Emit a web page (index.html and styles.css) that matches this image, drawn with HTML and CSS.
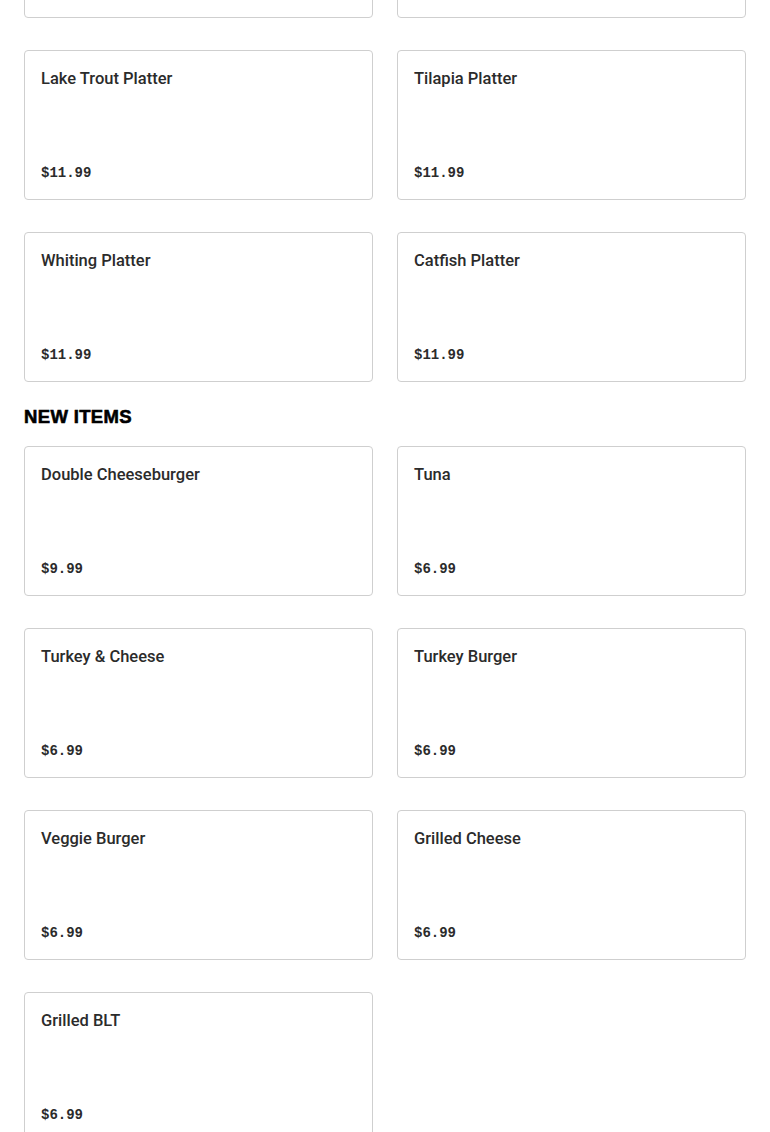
FILE: index.html
```html
<!DOCTYPE html>
<html lang="en">
<head>
<meta charset="utf-8">
<title>Menu</title>
<link rel="stylesheet" href="styles.css">
</head>
<body>
<main class="menu">
  <section class="section section-first">
    <div class="grid">
      <div class="card"></div>
      <div class="card"></div>
      <div class="card"><div class="name">Lake Trout Platter</div><div class="price">$11.99</div></div>
      <div class="card"><div class="name">Tilapia Platter</div><div class="price">$11.99</div></div>
      <div class="card"><div class="name">Whiting Platter</div><div class="price">$11.99</div></div>
      <div class="card"><div class="name">Catfish Platter</div><div class="price">$11.99</div></div>
    </div>
  </section>
  <section class="section">
    <h2 class="heading">NEW ITEMS</h2>
    <div class="grid">
      <div class="card"><div class="name">Double Cheeseburger</div><div class="price">$9.99</div></div>
      <div class="card"><div class="name">Tuna</div><div class="price">$6.99</div></div>
      <div class="card"><div class="name">Turkey &amp; Cheese</div><div class="price">$6.99</div></div>
      <div class="card"><div class="name">Turkey Burger</div><div class="price">$6.99</div></div>
      <div class="card"><div class="name">Veggie Burger</div><div class="price">$6.99</div></div>
      <div class="card"><div class="name">Grilled Cheese</div><div class="price">$6.99</div></div>
      <div class="card"><div class="name">Grilled BLT</div><div class="price">$6.99</div></div>
    </div>
  </section>
</main>
</body>
</html>
```
FILE: styles.css
```css
* { box-sizing: border-box; }
html, body { margin: 0; padding: 0; background: #fff; }
body { font-family: Roboto, "Noto Sans", sans-serif; color: #2b2b2b; }
.menu { padding: 0 24px; }
.section-first { margin-top: -132px; }
.grid {
  display: grid;
  grid-template-columns: 1fr 1fr;
  column-gap: 24px;
  row-gap: 32px;
}
.card {
  height: 150px;
  border: 1px solid #cfcfcf;
  border-radius: 4px;
  padding: 16px;
  display: flex;
  flex-direction: column;
  justify-content: space-between;
  background: #fff;
}
.name {
  font-size: 16.5px;
  line-height: 24px;
  font-weight: 500;
  color: #2b2b2b;
}
.price {
  font-family: "Liberation Mono", "DejaVu Sans Mono", monospace;
  font-size: 14px;
  line-height: 20px;
  font-weight: 700;
  color: #2b2b2b;
}
.heading {
  margin: 23px 0 17px;
  font-family: "Liberation Sans", Arial, sans-serif;
  font-size: 18.5px;
  line-height: 24px;
  font-weight: 700;
  letter-spacing: 0.35px;
  -webkit-text-stroke: 0.6px #000;
  color: #000;
}
```
